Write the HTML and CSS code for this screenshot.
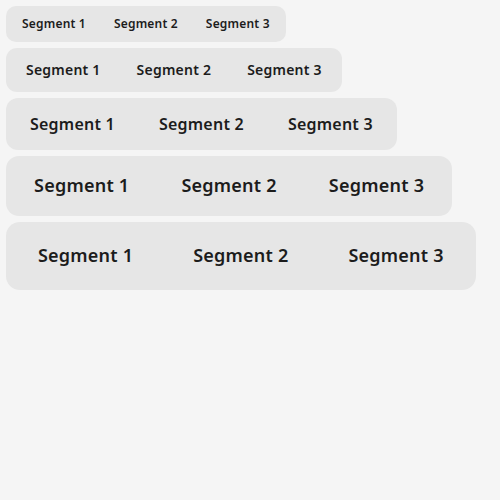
FILE: index.html
```html
<!DOCTYPE html>
<html>
<head>
<meta charset="utf-8">
<link rel="stylesheet" href="styles.css">
</head>
<body>
<div class="stack">
  <div class="seg seg-xs">
    <button class="item">Segment 1</button>
    <button class="item">Segment 2</button>
    <button class="item">Segment 3</button>
  </div>
  <div class="seg seg-sm">
    <button class="item">Segment 1</button>
    <button class="item">Segment 2</button>
    <button class="item">Segment 3</button>
  </div>
  <div class="seg seg-md">
    <button class="item">Segment 1</button>
    <button class="item">Segment 2</button>
    <button class="item">Segment 3</button>
  </div>
  <div class="seg seg-lg">
    <button class="item">Segment 1</button>
    <button class="item">Segment 2</button>
    <button class="item">Segment 3</button>
  </div>
  <div class="seg seg-xl">
    <button class="item">Segment 1</button>
    <button class="item">Segment 2</button>
    <button class="item">Segment 3</button>
  </div>
</div>
</body>
</html>
```
FILE: styles.css
```css
html, body {
  margin: 0;
  background: #f5f5f5;
}
body {
  padding: 6px;
  font-family: "Noto Sans", "DejaVu Sans", sans-serif;
}
.stack {
  display: flex;
  flex-direction: column;
  align-items: flex-start;
  gap: 6px;
}
.seg {
  display: flex;
  padding: 2px;
  background: #e6e6e6;
}
.item {
  border: 0;
  background: transparent;
  font-family: inherit;
  font-weight: 600;
  letter-spacing: 0.016em;
  color: #1c1c1c;
  white-space: nowrap;
  display: flex;
  align-items: center;
  justify-content: center;
  cursor: pointer;
}
.seg-xs { border-radius: 10px; }
.seg-xs .item { height: 32px; padding: 0 14px 1px; font-size: 12px; }
.seg-sm { border-radius: 11px; }
.seg-sm .item { height: 40px; padding: 0 18px 1px; font-size: 14px; }
.seg-md { border-radius: 12px; }
.seg-md .item { height: 48px; padding: 0 22px 1px; font-size: 16px; letter-spacing: 0.014em; }
.seg-lg { border-radius: 13px; }
.seg-lg .item { height: 56px; padding: 0 26px 2px; font-size: 18px; letter-spacing: 0.013em; }
.seg-xl { border-radius: 14px; }
.seg-xl .item { height: 64px; padding: 0 30px 2px; font-size: 18px; letter-spacing: 0.012em; }
```
